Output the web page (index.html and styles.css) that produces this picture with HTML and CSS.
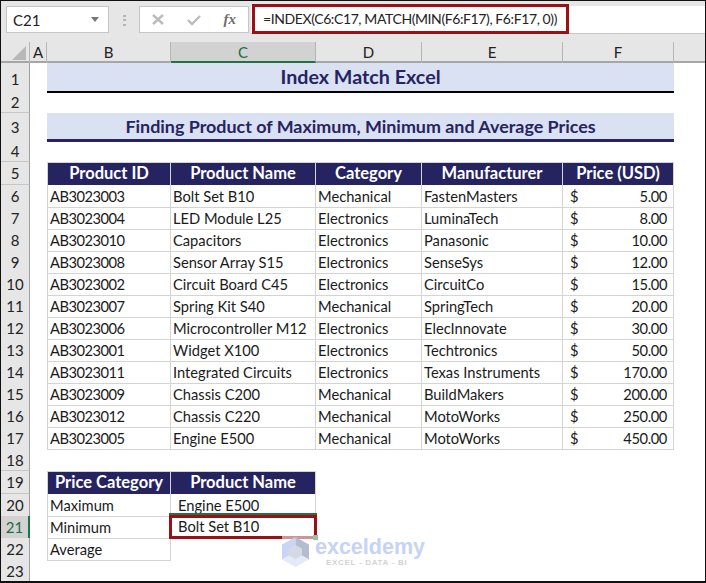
FILE: index.html
```html
<!DOCTYPE html>
<html lang="en">
<head>
<meta charset="utf-8">
<title>Index Match Excel</title>
<link rel="stylesheet" href="styles.css">
</head>
<body>
<div class="window">
  <div class="toolbar">
    <div class="namebox"><span>C21</span><svg class="caret" width="8" height="5" viewBox="0 0 8 5"><path d="M0 0h8L4 5z"/></svg></div>
    <svg class="grip" width="3" height="11" viewBox="0 0 3 11"><path d="M0 0h3v2H0zM0 4h3v2H0zM0 9h3v2H0z"/></svg>
    <div class="fnbox">
      <svg width="12" height="12" viewBox="0 0 12 12"><path d="M1 1l10 9M11 1L1 10"/></svg>
      <svg width="14" height="12" viewBox="0 0 14 12"><path d="M1 6l4 4 8-8"/></svg>
      <span class="fx">fx</span>
    </div>
    <div class="formula">=INDEX(C6:C17, MATCH(MIN(F6:F17), F6:F17, 0))</div>
  </div>
  <div class="row colheads">
    <div class="corner"><svg width="14" height="14" viewBox="0 0 14 14"><path d="M14 0v14H0z"/></svg></div>
    <div class="ch">A</div><div class="ch">B</div><div class="ch sel-col">C</div><div class="ch">D</div><div class="ch">E</div><div class="ch">F</div><div class="ch end"></div>
  </div>

  <div class="row h29"><div class="rh low">1</div><div></div><div class="title">Index Match Excel</div></div>
  <div class="row h21"><div class="rh">2</div></div>
  <div class="row h28"><div class="rh">3</div><div></div><div class="subtitle">Finding Product of Maximum, Minimum and Average Prices</div></div>
  <div class="row h21"><div class="rh">4</div></div>
  <div class="row h23"><div class="rh">5</div><div></div><div class="th">Product ID</div><div class="th">Product Name</div><div class="th">Category</div><div class="th">Manufacturer</div><div class="th">Price (USD)</div></div>

  <div class="row h22"><div class="rh">6</div><div></div><div class="td code">AB3023003</div><div class="td">Bolt Set B10</div><div class="td">Mechanical</div><div class="td">FastenMasters</div><div class="td price"><span>$</span><span>5.00</span></div></div>
  <div class="row h22"><div class="rh">7</div><div></div><div class="td code">AB3023004</div><div class="td">LED Module L25</div><div class="td">Electronics</div><div class="td">LuminaTech</div><div class="td price"><span>$</span><span>8.00</span></div></div>
  <div class="row h22"><div class="rh">8</div><div></div><div class="td code">AB3023010</div><div class="td">Capacitors</div><div class="td">Electronics</div><div class="td">Panasonic</div><div class="td price"><span>$</span><span>10.00</span></div></div>
  <div class="row h22"><div class="rh">9</div><div></div><div class="td code">AB3023008</div><div class="td">Sensor Array S15</div><div class="td">Electronics</div><div class="td">SenseSys</div><div class="td price"><span>$</span><span>12.00</span></div></div>
  <div class="row h22"><div class="rh">10</div><div></div><div class="td code">AB3023002</div><div class="td">Circuit Board C45</div><div class="td">Electronics</div><div class="td">CircuitCo</div><div class="td price"><span>$</span><span>15.00</span></div></div>
  <div class="row h22"><div class="rh">11</div><div></div><div class="td code">AB3023007</div><div class="td">Spring Kit S40</div><div class="td">Mechanical</div><div class="td">SpringTech</div><div class="td price"><span>$</span><span>20.00</span></div></div>
  <div class="row h22"><div class="rh">12</div><div></div><div class="td code">AB3023006</div><div class="td">Microcontroller M12</div><div class="td">Electronics</div><div class="td">ElecInnovate</div><div class="td price"><span>$</span><span>30.00</span></div></div>
  <div class="row h22"><div class="rh">13</div><div></div><div class="td code">AB3023001</div><div class="td">Widget X100</div><div class="td">Electronics</div><div class="td">Techtronics</div><div class="td price"><span>$</span><span>50.00</span></div></div>
  <div class="row h22"><div class="rh">14</div><div></div><div class="td code">AB3023011</div><div class="td">Integrated Circuits</div><div class="td">Electronics</div><div class="td">Texas Instruments</div><div class="td price"><span>$</span><span>170.00</span></div></div>
  <div class="row h22"><div class="rh">15</div><div></div><div class="td code">AB3023009</div><div class="td">Chassis C200</div><div class="td">Mechanical</div><div class="td">BuildMakers</div><div class="td price"><span>$</span><span>200.00</span></div></div>
  <div class="row h22"><div class="rh">16</div><div></div><div class="td code">AB3023012</div><div class="td">Chassis C220</div><div class="td">Mechanical</div><div class="td">MotoWorks</div><div class="td price"><span>$</span><span>250.00</span></div></div>
  <div class="row h22"><div class="rh">17</div><div></div><div class="td code">AB3023005</div><div class="td">Engine E500</div><div class="td">Mechanical</div><div class="td">MotoWorks</div><div class="td price"><span>$</span><span>450.00</span></div></div>

  <div class="row h22"><div class="rh">18</div></div>
  <div class="row h23"><div class="rh">19</div><div></div><div class="th">Price Category</div><div class="th">Product Name</div></div>
  <div class="row h22"><div class="rh">20</div><div></div><div class="td">Maximum</div><div class="td indent">Engine E500</div></div>
  <div class="row h22"><div class="rh sel-row">21</div><div></div><div class="td">Minimum</div><div class="td indent selected">Bolt Set B10</div></div>
  <div class="row h22"><div class="rh">22</div><div></div><div class="td">Average</div></div>
  <div class="row h22"><div class="rh">23</div></div>

  <div class="watermark">
    <svg class="wm-logo" width="27" height="30" viewBox="0 0 27 30"><path class="wm-a" d="M13.5 0L0 7.5v15L13.5 15z"/><path class="wm-b" d="M13.5 0L27 7.5v15L13.5 15z"/><path class="wm-c" d="M0 22.5L13.5 15 27 22.5 13.5 30z"/><path class="wm-d" d="M13.5 8l6.500 3.500v7L13.500 22 7 18.500v-7z"/></svg>
    <div class="wm-text"><div class="wm-name">exceldemy</div><div class="wm-tag">EXCEL - DATA - BI</div></div>
  </div>
</div>
</body>
</html>
```
FILE: styles.css
```css
* { box-sizing: border-box; }
html, body { margin: 0; padding: 0; background: #fff; }
body { font-family: Lato, "Open Sans", sans-serif; font-size: 15px; color: #1a1a1a; }

.window {
  position: relative;
  width: 706px;
  height: 583px;
  overflow: hidden;
  border: solid #111;
  border-width: 1px 1px 2px 1px;
  background: #fff;
}

/* formula bar */
.toolbar {
  height: 41px;
  background: #e6e6e6;
  display: flex;
  align-items: flex-start;
  padding: 5px 0 0 5px;
  position: relative;
}
.namebox {
  width: 103px;
  height: 27px;
  background: #fff;
  border: 1px solid #c6c6c6;
  display: flex;
  align-items: center;
  justify-content: space-between;
  padding: 0 9px 0 6px;
  font-size: 15px;
  color: #222;
}
.caret { fill: #777; }
.grip { fill: #b5b5b5; margin: 9px 13px 0 14px; flex: none; }
.fnbox {
  width: 110px;
  height: 27px;
  background: #fff;
  border: 1px solid #c6c6c6;
  display: flex;
  align-items: center;
  padding: 0 12px 0 12px;
  justify-content: space-between;
}
.fnbox svg { fill: none; stroke: #bcbcbc; stroke-width: 2.4; }
.fx {
  font-family: "Liberation Serif", serif;
  font-style: italic;
  font-weight: bold;
  font-size: 15px;
  color: #6e6e6e;
}
.formula {
  width: 317px;
  flex: none;
  height: 30px;
  margin: -2px 0 0 3px;
  background: #fff;
  border: 3px solid #9b1016;
  padding-left: 8px;
  line-height: 23px;
  font-size: 14px;
  letter-spacing: -0.4px;
  white-space: nowrap;
  color: #222;
  position: relative;
}
.toolbar::before {
  content: "";
  position: absolute;
  left: 250px;
  right: 0;
  top: 5px;
  height: 27px;
  background: #fff;
  border-bottom: 1px solid #c6c6c6;
}
.namebox, .fnbox, .grip { position: relative; }

/* sheet rows */
.row {
  display: grid;
  grid-template-columns: 29px 17px 124px 145px 106px 141px 111px 1fr;
}
.h21 { height: 21px; }
.h22 { height: 22px; }
.h23 { height: 23px; }
.h28 { height: 28px; }
.h29 { height: 29px; }

.colheads { height: 21px; background: #e6e6e6; border-bottom: 2px solid #a6a6a6; }
.corner { display: flex; justify-content: flex-end; padding: 4px 3px 0 0; border-right: 1px solid #b5b5b5; }
.corner svg { fill: #b8b8b8; }
.ch {
  text-align: center;
  line-height: 21px;
  font-size: 15px;
  color: #222;
  border-right: 1px solid #b5b5b5;
}
.ch.end { border: 0; }
.sel-col { background: #d2d2d2; color: #1d6b40; border-bottom: 2px solid #217346; height: 21px; }

.rh {
  background: #e6e6e6;
  border-right: 1px solid #9e9e9e;
  border-bottom: 1px solid #c6c6c6;
  text-align: center;
  font-size: 15px;
  color: #222;
  display: flex;
  align-items: center;
  justify-content: center;
}
.low { padding-top: 2px; }
.sel-row { background: #d2d2d2; color: #1d6b40; border-right: 2px solid #217346; }

.title, .subtitle {
  grid-column: 3 / 8;
  background: #d9e1f2;
  color: #262460;
  font-weight: 700;
  text-align: center;
}
.title { font-size: 19.7px; line-height: 28px; border-bottom: 2px solid #000; }
.subtitle { font-size: 17.9px; line-height: 26px; border-bottom: 3px solid #262460; }

.th {
  background: #262460;
  color: #fff;
  font-weight: 700;
  font-size: 16.5px;
  text-align: center;
  line-height: 21px;
  border: 1px solid #d4d4d4;
  border-width: 1px 1px 0 0;
}
.th:nth-child(3) { border-left-width: 1px; }

.td {
  border-right: 1px solid #d4d4d4;
  border-bottom: 1px solid #d4d4d4;
  padding: 0 2px;
  line-height: 22px;
  font-size: 14.7px;
  white-space: nowrap;
  color: #1a1a1a;
}
.td:nth-child(3) { border-left: 1px solid #d4d4d4; padding-left: 2px; }
.code { letter-spacing: -0.5px; }
.price { display: flex; justify-content: space-between; padding: 0 6px 0 7px; letter-spacing: -0.4px; }
.indent { padding-left: 7px; }

.selected {
  position: relative;
  box-shadow: 0 -2px 0 #217346;
  border: 3px solid #9b1016;
  margin: -1px -1px -1px -2px;
  padding-left: 6px;
  line-height: 17px;
  z-index: 1;
  height: 24px;
}
.selected::after {
  content: "";
  position: absolute;
  right: -4px;
  bottom: -4px;
  width: 5px;
  height: 5px;
  background: #217346;
}

/* watermark */
.watermark {
  position: absolute;
  left: 281px;
  top: 534px;
  width: 142px;
  height: 36px;
  display: flex;
  gap: 6px;
  padding-top: 2px;
  background: rgba(255, 255, 255, 0.55);
  z-index: 2;
}
.wm-logo { flex: none; }
.wm-a { fill: #c9d6f3; }
.wm-b { fill: #b4bccf; }
.wm-c { fill: #e4ebf8; }
.wm-d { fill: #d5d9e2; }
.wm-text { display: flex; flex-direction: column; align-items: flex-start; }
.wm-name {
  font-family: "Liberation Sans", sans-serif;
  font-weight: 700;
  font-size: 21.500px;
  line-height: 21px;
  color: #c6d3f4;
}
.wm-tag {
  font-family: "Liberation Sans", sans-serif;
  font-size: 8px;
  font-weight: 700;
  line-height: 9px;
  letter-spacing: 0.7px;
  margin-left: 11px;
  color: #d3d3d3;
}
```
